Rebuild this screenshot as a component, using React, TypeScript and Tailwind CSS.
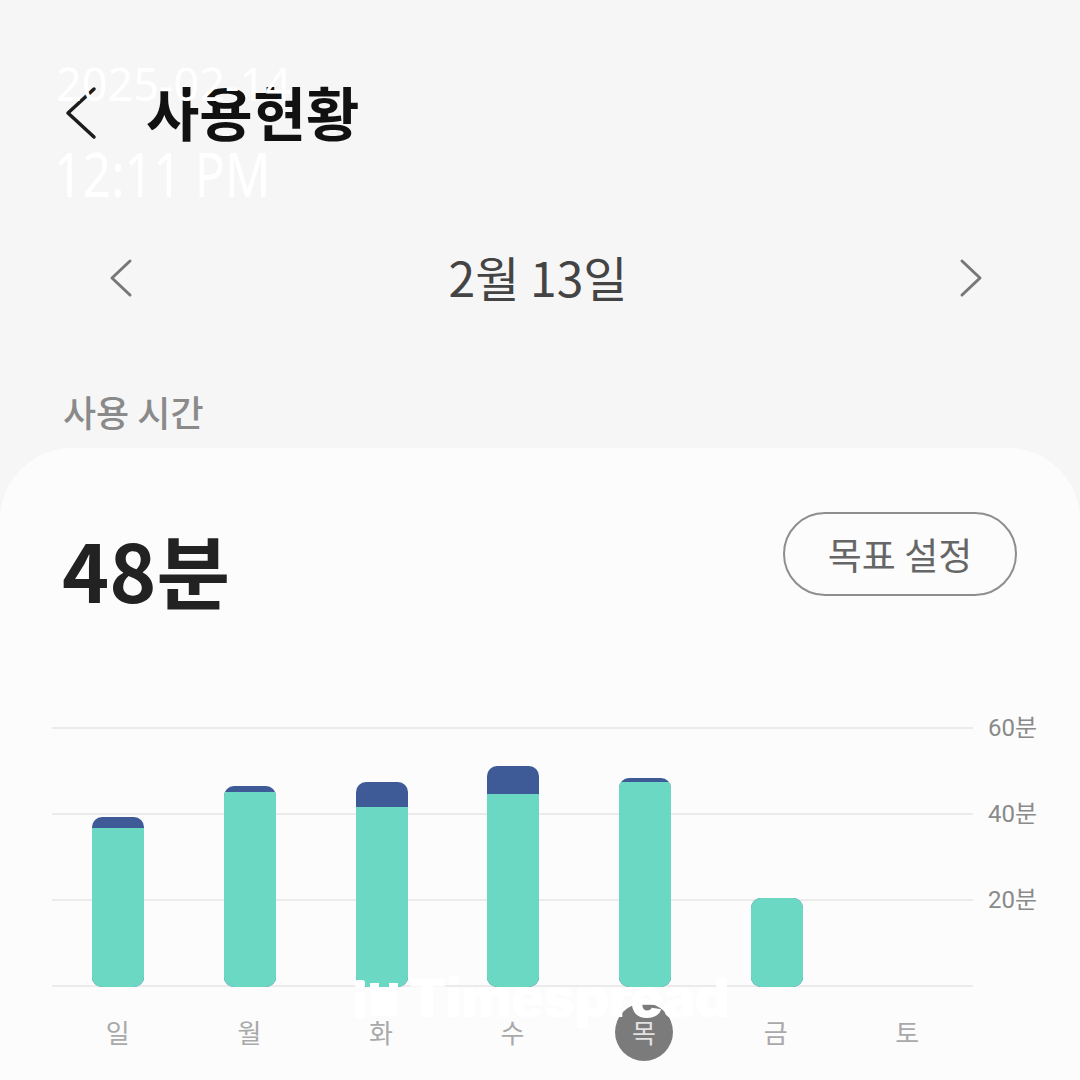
import React from "react";

const bars = [
  { x: 40, top: 91, split: 102 },
  { x: 172, top: 60, split: 66 },
  { x: 304, top: 56, split: 81 },
  { x: 435, top: 40, split: 68 },
  { x: 567, top: 52, split: 56 },
  { x: 699, top: 172, split: 172 },
];

const days = ["일", "월", "화", "수", "목", "금", "토"];

function Chart() {
  return (
    <svg width="921" height="262" viewBox="0 0 921 262" className="block">
      {[2, 88, 174, 260].map((y) => (
        <line key={y} x1="0" x2="921" y1={y} y2={y} stroke="#ebebeb" strokeWidth="2" />
      ))}
      <defs>
        {bars.map((b, i) => (
          <clipPath id={`bar${i}`} key={i}>
            <rect x={b.x} y={b.top} width="52" height={261 - b.top} rx="10" ry="10" />
          </clipPath>
        ))}
      </defs>
      {bars.map((b, i) => (
        <g key={i} clipPath={`url(#bar${i})`}>
          <rect x={b.x} y={b.top} width="52" height={261 - b.top} fill="#3e5b98" />
          <rect x={b.x} y={b.split} width="52" height={261 - b.split} fill="#6ad8c2" />
        </g>
      ))}
    </svg>
  );
}

export default function App() {
  const ko = { fontFamily: '"Noto Sans CJK KR", "Noto Sans", sans-serif' };
  return (
    <div
      className="relative w-[1080px] h-[1080px] overflow-hidden bg-[#f6f6f6] flex flex-col"
      style={ko}
    >
      {/* header */}
      <div className="mt-[71px] h-[80px] flex items-center">
        <svg width="36" height="56" viewBox="0 0 36 56" className="ml-[64px] mt-[6px] shrink-0">
          <path d="M30 3 L4 27 L30 51" fill="none" stroke="#1c1c1c" strokeWidth="3.5" strokeLinecap="round" strokeLinejoin="round" />
        </svg>
        <div className="ml-[46px] text-[58px] leading-none font-bold text-[#111]">사용현황</div>
      </div>

      {/* date nav */}
      <div className="mt-[87px] h-[80px] flex items-center">
        <svg width="28" height="40" viewBox="0 0 28 40" className="ml-[108px] shrink-0">
          <path d="M22 3 L4 20 L22 37" fill="none" stroke="#777" strokeWidth="3" strokeLinecap="round" strokeLinejoin="round" />
        </svg>
        <div className="flex-1 pr-[16px] pb-[4px] text-center text-[48px] leading-none text-[#444]">2월 13일</div>
        <svg width="28" height="40" viewBox="0 0 28 40" className="mr-[96px] shrink-0">
          <path d="M6 3 L24 20 L6 37" fill="none" stroke="#777" strokeWidth="3" strokeLinecap="round" strokeLinejoin="round" />
        </svg>
      </div>

      <div className="mt-[75px] pl-[63px] text-[36px] leading-none font-medium text-[#8a8a8a]">사용 시간</div>

      {/* card */}
      <div className="mt-[19px] flex-1 rounded-t-[72px] bg-[#fcfcfc] flex flex-col">
        <div className="mt-[64px] flex items-start justify-between pl-[62px] pr-[63px]">
          <div className="mt-[16px] text-[80px] leading-none font-bold text-[#222]">48분</div>
          <div className="w-[234px] h-[84px] rounded-full border-2 border-[#8e8e8e] flex items-center justify-center text-[37px] leading-none text-[#666]">
            목표 설정
          </div>
        </div>

        <div className="mt-[108px] flex items-start">
          <div className="ml-[52px] mt-[10px]">
            <Chart />
          </div>
          <div className="ml-[15px] flex flex-col" style={{ fontFamily: '"Roboto", "Noto Sans CJK KR", sans-serif' }}>
            {["60분", "40분", "20분"].map((l) => (
              <div key={l} className="h-[86px] text-[24px] leading-[24px] text-[#8a8a8a]">
                {l}
              </div>
            ))}
          </div>
        </div>

        <div className="mt-[15px] ml-[52px] w-[921px] grid grid-cols-7 h-[58px]">
          {days.map((d) => (
            <div key={d} className="flex items-center justify-center">
              {d === "목" ? (
                <div className="w-[58px] h-[58px] rounded-full bg-[#7b7b7b] flex items-center justify-center text-[26px] leading-none text-[#e2e2e2]">
                  {d}
                </div>
              ) : (
                <div className="text-[26px] leading-none text-[#a9a9a9]">{d}</div>
              )}
            </div>
          ))}
        </div>
      </div>

      {/* timestamp overlay */}
      <div
        className="absolute left-[56px] top-[61px] text-[45px] leading-none text-white"
        style={{ fontFamily: '"Noto Sans", sans-serif' }}
      >
        2025-02-14
      </div>
      <div
        className="absolute left-[54px] top-[142px] text-[50px] leading-none text-white origin-top-left scale-y-[1.24]"
        style={{ fontFamily: '"Noto Sans", sans-serif' }}
      >
        12:11 PM
      </div>

      {/* watermark */}
      <div className="absolute left-[355px] top-[971px] flex items-center gap-[10px] text-white">
        <svg width="44" height="40" viewBox="0 0 44 40" className="shrink-0">
          <rect x="0" y="2" width="10" height="8" rx="3" fill="#fff" />
          <rect x="0" y="14" width="10" height="26" rx="2" fill="#fff" />
          <path d="M15 5 H24 V10 H34 V5 H43 V38 H15 Z" fill="#fff" />
        </svg>
        <div
          className="text-[54px] leading-none font-black tracking-[-0.01em]"
          style={{ fontFamily: '"Inter", "Roboto", sans-serif' }}
        >
          Timespread
        </div>
      </div>
    </div>
  );
}
